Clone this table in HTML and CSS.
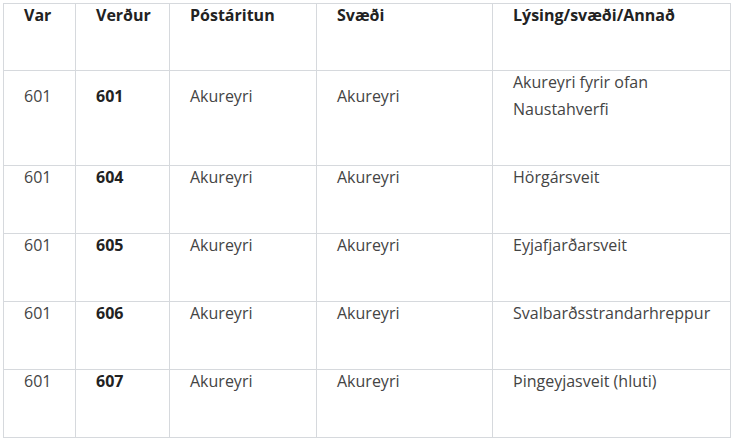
FILE: index.html
```html
<!DOCTYPE html>
<html lang="is">
<head>
<meta charset="utf-8">
<link rel="stylesheet" href="styles.css">
</head>
<body>
<div class="wrap">
<table class="zip-table">
<colgroup>
<col class="c1"><col class="c2"><col class="c3"><col class="c4"><col class="c5">
</colgroup>
<thead>
<tr><th><div class="in">Var</div></th><th><div class="in">Verður</div></th><th><div class="in">Póstáritun</div></th><th><div class="in">Svæði</div></th><th><div class="in">Lýsing/svæði/Annað</div></th></tr>
</thead>
<tbody>
<tr><td><div class="in">601</div></td><td class="b"><div class="in">601</div></td><td><div class="in">Akureyri</div></td><td><div class="in">Akureyri</div></td><td><div class="in">Akureyri fyrir ofan Naustahverfi</div></td></tr>
<tr><td><div class="in">601</div></td><td class="b"><div class="in">604</div></td><td><div class="in">Akureyri</div></td><td><div class="in">Akureyri</div></td><td><div class="in">Hörgársveit</div></td></tr>
<tr><td><div class="in">601</div></td><td class="b"><div class="in">605</div></td><td><div class="in">Akureyri</div></td><td><div class="in">Akureyri</div></td><td><div class="in">Eyjafjarðarsveit</div></td></tr>
<tr><td><div class="in">601</div></td><td class="b"><div class="in">606</div></td><td><div class="in">Akureyri</div></td><td><div class="in">Akureyri</div></td><td><div class="in">Svalbarðsstrandarhreppur</div></td></tr>
<tr><td><div class="in">601</div></td><td class="b"><div class="in">607</div></td><td><div class="in">Akureyri</div></td><td><div class="in">Akureyri</div></td><td><div class="in">Þingeyjasveit (hluti)</div></td></tr>
</tbody>
</table>
</div>
</body>
</html>
```
FILE: styles.css
```css
html, body {
  margin: 0;
  padding: 0;
  background: #ffffff;
}
.wrap {
  padding: 3px;
}
.zip-table {
  border-collapse: collapse;
  table-layout: fixed;
  width: 727px;
  font-family: "Open Sans", "Liberation Sans", sans-serif;
  font-size: 16px;
  line-height: 27px;
  color: #444444;
}
.c1 { width: 72px; }
.c2 { width: 94px; }
.c3 { width: 147px; }
.c4 { width: 176px; }
.c5 { width: 238px; }
.zip-table th,
.zip-table td {
  border: 1px solid #d6d9dd;
  padding: 0 20px 42px 20px;
  text-align: left;
  vertical-align: middle;
}
.zip-table th {
  font-weight: 700;
  color: #222222;
  padding-bottom: 41px;
  vertical-align: top;
}
.zip-table td.b {
  font-weight: 700;
  color: #222222;
}
.in {
  margin-top: -2px;
}
```
